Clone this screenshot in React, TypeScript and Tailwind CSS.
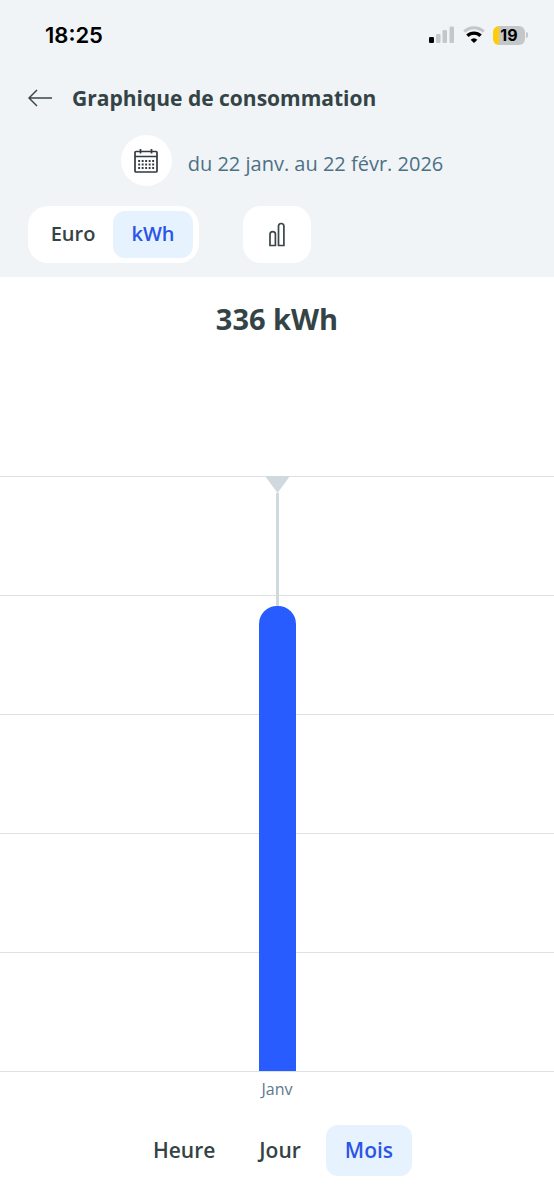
import { useState } from 'react';

interface Reading {
  label: string;
  kwh: number;
}

interface SegmentProps {
  label: string;
  active: boolean;
  onClick: () => void;
  className?: string;
}

const readings: Reading[] = [{ label: 'Janv', kwh: 336 }];
const chartMax = 430;
const gridRows = [1, 2, 3, 4, 5];
const units = ['Euro', 'kWh'];
const periods = ['Heure', 'Jour', 'Mois'];

const StatusBar = () => (
  <div className="flex h-[70px] items-center justify-between pl-[45px] pr-[26px] text-black">
    <span className="font-['Inter',sans-serif] text-[22px] font-semibold leading-7">18:25</span>
    <div className="flex items-center gap-2">
      <svg width="26" height="18" viewBox="0 0 26 18" aria-hidden="true">
        <rect x="0" y="11" width="5" height="6" rx="1.3" fill="#000" />
        <rect x="7" y="8" width="4.5" height="9" rx="1.3" fill="#c3c7c9" />
        <rect x="13.5" y="4" width="4.5" height="13" rx="1.3" fill="#c3c7c9" />
        <rect x="20.5" y="0.5" width="4.5" height="16.5" rx="1.3" fill="#c3c7c9" />
      </svg>
      <svg width="22" height="18" viewBox="0 0 22 18" fill="none" aria-hidden="true">
        <path d="M1.2 5.6a14.2 14.2 0 0 1 19.6 0" stroke="#c3c7c9" strokeWidth="3" />
        <path d="M4.4 9.8a9.4 9.4 0 0 1 13.2 0" stroke="#000" strokeWidth="3.4" />
        <path d="M11 17 7.6 13.8a5 5 0 0 1 6.8 0z" fill="#000" />
      </svg>
      <div className="flex items-center gap-px">
        <div className="flex h-[19px] w-8 items-center justify-center rounded-md bg-linear-to-r from-[#fecc0a] from-20% to-[#c3c7c9] to-20%">
          <span className="font-['Inter',sans-serif] text-base font-bold leading-none">19</span>
        </div>
        <span className="h-1.5 w-0.5 rounded-r-full bg-[#c3c7c9]" />
      </div>
    </div>
  </div>
);

const CalendarIcon = () => (
  <svg width="24" height="26" viewBox="0 0 24 26" fill="none" stroke="#323b40" strokeWidth="1.7" aria-hidden="true">
    <rect x="1" y="3.5" width="22" height="20.5" rx="1" />
    <path d="M1 8.5h22M6.5 1v4.5M17.5 1v4.5" />
    <path d="M4.2 13h16M4.2 16.5h16M4.2 20h16" strokeWidth="1.9" strokeDasharray="1.9 1.6" />
  </svg>
);

const BarsIcon = () => (
  <svg width="18" height="26" viewBox="0 0 18 26" fill="none" stroke="#3a4648" strokeWidth="1.7" aria-hidden="true">
    <path d="M2 23.5V12.3a2.7 2.7 0 0 1 5.4 0v11.2zM10.5 23.5V4.2a2.7 2.7 0 0 1 5.4 0v19.3z" />
  </svg>
);

const Segment = ({ label, active, onClick, className = '' }: SegmentProps) => (
  <button
    type="button"
    aria-pressed={active}
    onClick={onClick}
    className={`font-semibold ${active ? 'bg-[#e7f2ff] text-[#2c55e6]' : 'text-[#344345]'} ${className}`}
  >
    {label}
  </button>
);

const App = () => {
  const [unit, setUnit] = useState('kWh');
  const [period, setPeriod] = useState('Mois');

  return (
    <div className="flex min-h-screen flex-col bg-white font-['Open_Sans',sans-serif] text-[#344345]">
      <header className="bg-[#f0f4f6] pb-[14px]">
        <StatusBar />

        <div className="flex h-14 items-center gap-5 px-7">
          <button type="button" aria-label="Retour">
            <svg width="24" height="18" viewBox="0 0 24 18" fill="none" stroke="#3a4648" strokeWidth="1.5" aria-hidden="true">
              <path d="M24 9H1M9 1 1 9l8 8" />
            </svg>
          </button>
          <h1 className="text-[21px] font-bold leading-7">Graphique de consommation</h1>
        </div>

        <div className="flex items-center justify-center gap-4 pl-[10px] pt-[9px]">
          <button
            type="button"
            aria-label="Choisir la période"
            className="flex size-[51px] items-center justify-center rounded-full bg-white"
          >
            <CalendarIcon />
          </button>
          <p className="pt-1.5 text-[20px] leading-7 text-[#4d7085]">du 22 janv. au 22 févr. 2026</p>
        </div>

        <div className="flex gap-11 px-7 pt-5">
          <div className="flex rounded-[20px] bg-white py-[5px] pl-[5px] pr-1.5">
            {units.map((item) => (
              <Segment
                key={item}
                label={item}
                active={unit === item}
                onClick={() => setUnit(item)}
                className="h-[47px] w-20 rounded-xl pb-0.5 text-[20px] leading-7"
              />
            ))}
          </div>
          <button
            type="button"
            aria-label="Type de graphique"
            className="flex h-[57px] w-[68px] items-center justify-center rounded-[18px] bg-white"
          >
            <BarsIcon />
          </button>
        </div>
      </header>

      <main className="flex flex-1 flex-col">
        <h2 className="pt-6 text-center text-[29px] font-bold leading-9">336 kWh</h2>

        <div className="relative mt-[139px] flex flex-1 flex-col border-b border-[#dbe2e6]">
          {gridRows.map((row) => (
            <div key={row} className="flex-1 border-t border-[#dbe2e6]" />
          ))}
          <div className="absolute inset-0 flex justify-center">
            {readings.map((reading) => (
              <div key={reading.label} className="flex h-full flex-col items-center">
                <svg width="25" height="17" viewBox="0 0 25 17" aria-hidden="true">
                  <path d="M0 0h25L12.5 17z" fill="#cfd9de" />
                </svg>
                <div className="w-[3px] flex-1 bg-[#cfd9de]" />
                <div
                  className="w-[37px] rounded-t-[18px] bg-[#295cff]"
                  style={{ height: `${(reading.kwh / chartMax) * 100}%` }}
                />
              </div>
            ))}
          </div>
        </div>

        <div className="flex justify-center pt-[5px]">
          {readings.map((reading) => (
            <span key={reading.label} className="text-base leading-6 text-[#5c7a8c]">
              {reading.label}
            </span>
          ))}
        </div>
      </main>

      <nav className="flex justify-center gap-1.5 pb-6 pr-2 pt-6">
        {periods.map((item) => (
          <Segment
            key={item}
            label={item}
            active={period === item}
            onClick={() => setPeriod(item)}
            className="h-[51px] rounded-xl px-[19px] pb-px text-[21px] leading-7"
          />
        ))}
      </nav>
    </div>
  );
};

export default App;
